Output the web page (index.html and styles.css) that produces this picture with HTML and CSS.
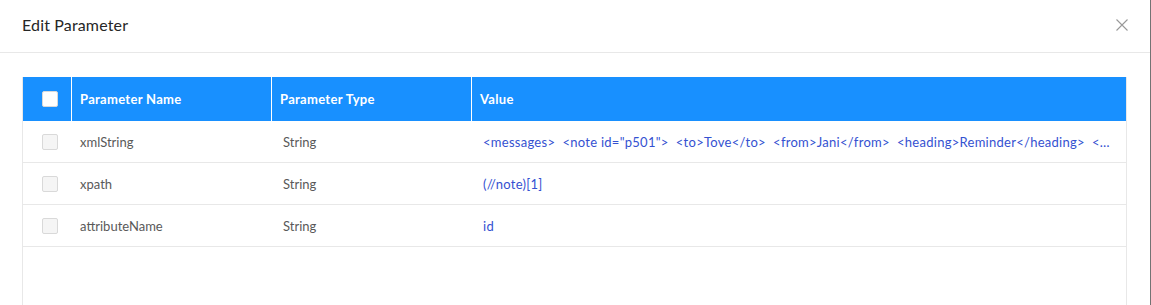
FILE: index.html
```html
<!DOCTYPE html>
<html>

<head>
    <meta charset="UTF-8">
    <title>Edit Parameter</title>
    <link rel="stylesheet" href="styles.css">
</head>

<body>
    <div class="modal">
        <div class="modal-header">
            <div class="modal-title">Edit Parameter</div>
            <svg class="modal-close" width="12" height="12" viewBox="0 0 12 12">
                <path d="M0.5 0.5 L11.5 11.5 M11.5 0.5 L0.5 11.5" stroke="#999" stroke-width="1.1" fill="none" />
            </svg>
        </div>

        <div class="modal-body">
            <div class="table-wrap">
                <table class="param-table">
                    <colgroup>
                        <col class="col-check">
                        <col class="col-name">
                        <col class="col-type">
                        <col>
                    </colgroup>
                    <thead>
                        <tr>
                            <th class="cell-check"><span class="checkbox"></span></th>
                            <th>Parameter Name</th>
                            <th>Parameter Type</th>
                            <th class="last">Value</th>
                        </tr>
                    </thead>
                    <tbody>
                        <tr>
                            <td class="cell-check"><span class="checkbox disabled"></span></td>
                            <td>xmlString</td>
                            <td class="type">String</td>
                            <td class="value">&lt;messages&gt;  &lt;note id="p501"&gt;  &lt;to&gt;Tove&lt;/to&gt;  &lt;from&gt;Jani&lt;/from&gt;  &lt;heading&gt;Reminder&lt;/heading&gt;  &lt;body&gt;Don't forget me this weekend!&lt;/body&gt;  &lt;/note&gt;  &lt;/messages&gt;</td>
                        </tr>
                        <tr>
                            <td class="cell-check"><span class="checkbox disabled"></span></td>
                            <td>xpath</td>
                            <td class="type">String</td>
                            <td class="value">(//note)[1]</td>
                        </tr>
                        <tr>
                            <td class="cell-check"><span class="checkbox disabled"></span></td>
                            <td>attributeName</td>
                            <td class="type">String</td>
                            <td class="value">id</td>
                        </tr>
                    </tbody>
                </table>
            </div>
        </div>
    </div>
</body>

</html>
```

FILE: styles.css
```css
body {
    margin: 0;
    background-color: #737373;
    font-family: Lato, "Noto Sans", sans-serif;
    overflow: hidden;
}

.modal {
    width: 1150px;
    height: 305px;
    overflow: hidden;
    background-color: white;
}

.modal-header {
    box-sizing: border-box;
    height: 53px;
    padding: 0 22px 3px 22px;
    border-bottom: 1px solid #e8e8e8;
    display: flex;
    align-items: center;
    justify-content: space-between;
}

.modal-title {
    font-size: 16px;
    letter-spacing: 0.15px;
    color: #262626;
}

.modal-body {
    padding: 24px 23px 0 22px;
}

.table-wrap {
    height: 240px;
    border-left: 1px solid #e8e8e8;
    border-right: 1px solid #e8e8e8;
}

.param-table {
    width: 100%;
    table-layout: fixed;
    border-collapse: separate;
    border-spacing: 0;
    font-size: 13px;
}

.col-check {
    width: 49px;
}

.col-name,
.col-type {
    width: 200px;
}

.param-table th {
    box-sizing: border-box;
    height: 44px;
    padding: 0 8px;
    background-color: #1890ff;
    color: white;
    font-weight: bold;
    letter-spacing: 0.3px;
    text-align: left;
    border-right: 1px solid white;
}

.param-table th.last {
    border-right: none;
}

.param-table td {
    box-sizing: border-box;
    height: 42px;
    padding: 0 8px;
    color: #595959;
    border-bottom: 1px solid #e8e8e8;
    white-space: nowrap;
    overflow: hidden;
}

.param-table td.type {
    padding-left: 11px;
}

.param-table td.value {
    color: #3451d1;
    white-space: pre;
    letter-spacing: 0.27px;
    text-overflow: ellipsis;
    padding: 0 14px 0 11px;
}

.param-table .cell-check {
    padding: 0 0 0 19px;
}

.checkbox {
    display: block;
    box-sizing: border-box;
    width: 16px;
    height: 16px;
    border-radius: 2px;
    background-color: white;
    border: 1px solid #d9d9d9;
}

.checkbox.disabled {
    background-color: #f5f5f5;
}
```
